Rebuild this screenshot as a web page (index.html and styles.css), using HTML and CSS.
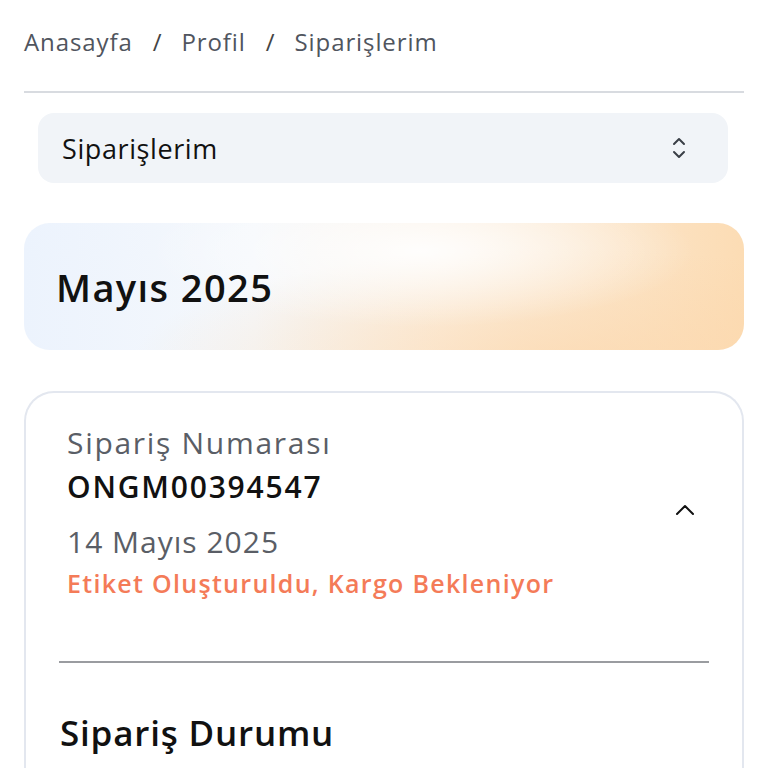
FILE: index.html
```html
<!DOCTYPE html>
<html lang="tr">
<head>
<meta charset="utf-8">
<link rel="stylesheet" href="styles.css">
</head>
<body>
<div class="page">
  <nav class="crumbs">
    <span>Anasayfa</span><span class="sep">/</span><span>Profil</span><span class="sep">/</span><span>Siparişlerim</span>
  </nav>
  <hr class="rule">
  <div class="select">
    <span>Siparişlerim</span>
    <svg width="18" height="26" viewBox="0 0 18 26" fill="none" stroke="#3a3f47" stroke-width="2" stroke-linecap="round" stroke-linejoin="round"><path d="M4 9l5-5 5 5"/><path d="M4 17l5 5 5-5"/></svg>
  </div>
  <section class="month">
    <h2>Mayıs 2025</h2>
  </section>
  <article class="order">
    <div class="order-head">
      <div class="order-info">
        <div class="label">Sipariş Numarası</div>
        <div class="num">ONGM00394547</div>
        <div class="date">14 Mayıs 2025</div>
        <div class="status">Etiket Oluşturuldu, Kargo Bekleniyor</div>
      </div>
      <svg class="toggle" width="22" height="14" viewBox="0 0 22 14" fill="none" stroke="#111" stroke-width="2" stroke-linecap="round" stroke-linejoin="round"><path d="M3 11l8-8 8 8"/></svg>
    </div>
    <hr class="divider">
    <h3>Sipariş Durumu</h3>
  </article>
</div>
</body>
</html>
```
FILE: styles.css
```css
* { box-sizing: border-box; }
html, body { margin: 0; padding: 0; background: #fff; }
body { font-family: "Open Sans", "Noto Sans", sans-serif; color: #111; overflow: hidden; height: 768px; }
.page { padding: 0 24px; }
.crumbs { display: flex; align-items: center; gap: 20px; height: 82px; font-size: 24px; letter-spacing: 0.9px; color: #50555e; }
.crumbs .sep { color: #444; letter-spacing: 0; }
.rule { margin: 9px 0 0; border: 0; border-top: 2px solid #d8dbe0; }
.select { margin: 20px 16px 0 14px; height: 70px; background: #f1f4f8; border-radius: 16px; display: flex; align-items: center; justify-content: space-between; padding: 0 40px 0 24px; font-size: 27px; letter-spacing: 0.6px; color: #111; }
.month { margin-top: 40px; height: 127px; border-radius: 26px; display: flex; align-items: center; padding: 0 32px;
  background:
    radial-gradient(ellipse 38% 60% at 55% 22%, rgba(255,255,255,0.9), rgba(255,255,255,0) 100%),
    radial-gradient(ellipse 60% 90% at 75% 110%, rgba(252,214,170,0.65), rgba(252,214,170,0) 100%),
    linear-gradient(90deg, #ecf3fd 0%, #f5f8fc 32%, #fbf0e3 58%, #fcdcb4 100%); }
.month h2 { margin: 0; font-size: 38px; font-weight: 600; letter-spacing: 1.4px; }
.order { margin-top: 41px; border: 2.5px solid #e3e7ef; border-bottom: 0; border-radius: 30px 30px 0 0; padding: 30px 34px 0 41px; height: 400px; }
.order-head { display: flex; align-items: center; justify-content: space-between; }
.label { font-size: 30px; letter-spacing: 1.7px; color: #5a5e66; line-height: 40px; }
.num { font-size: 30px; font-weight: 600; letter-spacing: 1.8px; line-height: 48px; }
.date { font-size: 30px; letter-spacing: 1px; color: #5a5e66; margin-top: 10px; line-height: 42px; }
.status { font-size: 25px; font-weight: 600; letter-spacing: 1.3px; color: #f47b58; line-height: 40px; }
.toggle { margin-right: 12px; margin-top: -6px; }
.divider { margin: 58px 0 0 -8px; border: 0; border-top: 2px solid #9a9ca0; width: 650px; }
.order h3 { margin: 46px 0 0 -7px; font-size: 35px; font-weight: 600; letter-spacing: 0.8px; }
```
